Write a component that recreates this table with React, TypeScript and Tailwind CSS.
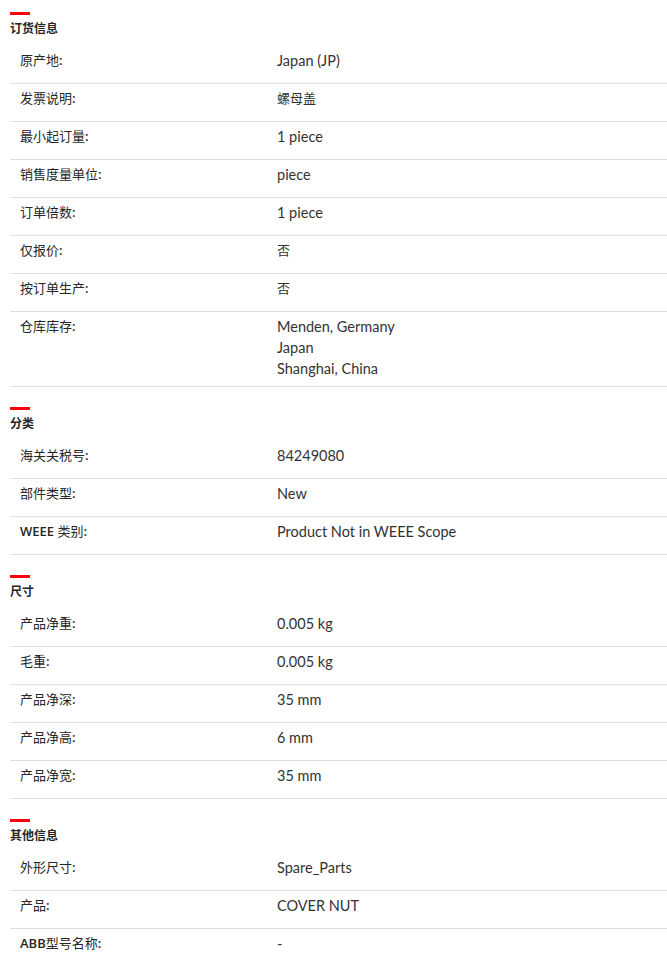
import React from "react";

type Row = { label: React.ReactNode; value: string[]; cjk?: boolean };
type Section = { title: string; rows: Row[] };

const B = ({ children }: { children: React.ReactNode }) => (
  <span className="font-semibold">{children}</span>
);

const C = <B>:</B>;

const sections: Section[] = [
  {
    title: "订货信息",
    rows: [
      { label: <>原产地{C}</>, value: ["Japan (JP)"] },
      { label: <>发票说明{C}</>, value: ["螺母盖"], cjk: true },
      { label: <>最小起订量{C}</>, value: ["1 piece"] },
      { label: <>销售度量单位{C}</>, value: ["piece"] },
      { label: <>订单倍数{C}</>, value: ["1 piece"] },
      { label: <>仅报价{C}</>, value: ["否"], cjk: true },
      { label: <>按订单生产{C}</>, value: ["否"], cjk: true },
      { label: <>仓库库存{C}</>, value: ["Menden, Germany", "Japan", "Shanghai, China"] },
    ],
  },
  {
    title: "分类",
    rows: [
      { label: <>海关关税号{C}</>, value: ["84249080"] },
      { label: <>部件类型{C}</>, value: ["New"] },
      { label: <><B>WEEE</B> 类别{C}</>, value: ["Product Not in WEEE Scope"] },
    ],
  },
  {
    title: "尺寸",
    rows: [
      { label: <>产品净重{C}</>, value: ["0.005 kg"] },
      { label: <>毛重{C}</>, value: ["0.005 kg"] },
      { label: <>产品净深{C}</>, value: ["35 mm"] },
      { label: <>产品净高{C}</>, value: ["6 mm"] },
      { label: <>产品净宽{C}</>, value: ["35 mm"] },
    ],
  },
  {
    title: "其他信息",
    rows: [
      { label: <>外形尺寸{C}</>, value: ["Spare_Parts"] },
      { label: <>产品{C}</>, value: ["COVER NUT"] },
      { label: <><B>ABB</B>型号名称{C}</>, value: ["-"] },
    ],
  },
];

export default function App() {
  return (
    <div
      className="w-[667px] bg-white pl-[10px] text-[13px] text-[#262626]"
      style={{ fontFamily: '"Open Sans", "Noto Sans CJK SC", sans-serif' }}
    >
      {sections.map((s, i) => (
        <div key={i} className={i === 0 ? "pt-[12px]" : "pt-[20px]"}>
          <div className="h-[3px] w-[20px] bg-[#ff000f]" />
          <div className="mt-[5px] mb-[8px] h-[18px] text-[12px] font-bold leading-[18px]">
            {s.title}
          </div>
          <div>
            {s.rows.map((r, j) => (
              <div
                key={j}
                className={
                  "flex min-h-[38px] pt-[4px] pb-[7px] " +
                  (j === s.rows.length - 1 && i === sections.length - 1
                    ? ""
                    : "border-b border-[#e0e0e0]")
                }
              >
                <div className="w-[267px] pl-[10px] leading-[21px]">{r.label}</div>
                <div
                  className={
                    "flex-1 leading-[21px] text-[#333] " +
                    (r.cjk ? "text-[13px]" : "text-[14.5px]")
                  }
                  style={{ fontFamily: 'Lato, "Noto Sans CJK SC", sans-serif' }}
                >
                  {r.value.map((v, k) => (
                    <div key={k}>{v}</div>
                  ))}
                </div>
              </div>
            ))}
          </div>
        </div>
      ))}
    </div>
  );
}
